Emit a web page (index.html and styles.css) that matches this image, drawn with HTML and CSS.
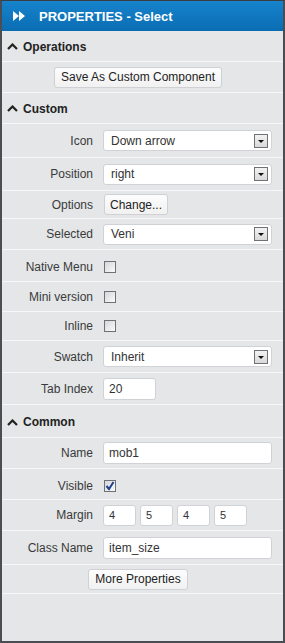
FILE: index.html
```html
<!DOCTYPE html>
<html lang="en">
<head>
    <meta charset="UTF-8">
    <meta name="viewport" content="width=device-width, initial-scale=1.0">
    <title>Properties - Select</title>
    <link rel="stylesheet" href="styles.css">
</head>
<body>
    <div class="panel">
        <div class="titlebar">
            <svg class="title-icon" width="12" height="10" viewBox="0 0 12 10">
                <path d="M0 0 L6 5 L0 10 Z M6 0 L12 5 L6 10 Z" fill="#fff"/>
            </svg>
            <span>PROPERTIES - Select</span>
        </div>

        <div class="section-head">
            <svg class="caret" width="11" height="7" viewBox="0 0 11 7">
                <path d="M1 6 L5.5 1.5 L10 6" fill="none" stroke="#222" stroke-width="2.2"/>
            </svg>
            Operations
        </div>
        <div class="row row-center">
            <button class="btn">Save As Custom Component</button>
        </div>

        <div class="section-head">
            <svg class="caret" width="11" height="7" viewBox="0 0 11 7">
                <path d="M1 6 L5.5 1.5 L10 6" fill="none" stroke="#222" stroke-width="2.2"/>
            </svg>
            Custom
        </div>
        <div class="row h34">
            <label>Icon</label>
            <div class="select"><span>Down arrow</span><span class="arrow"></span></div>
        </div>
        <div class="row h33">
            <label>Position</label>
            <div class="select"><span>right</span><span class="arrow"></span></div>
        </div>
        <div class="row h28">
            <label>Options</label>
            <button class="btn btn-small">Change...</button>
        </div>
        <div class="row">
            <label>Selected</label>
            <div class="select"><span>Veni</span><span class="arrow"></span></div>
        </div>
        <div class="row h32 low">
            <label>Native Menu</label>
            <span class="check"></span>
        </div>
        <div class="row h30">
            <label>Mini version</label>
            <span class="check"></span>
        </div>
        <div class="row h29">
            <label>Inline</label>
            <span class="check"></span>
        </div>
        <div class="row h32">
            <label>Swatch</label>
            <div class="select"><span>Inherit</span><span class="arrow"></span></div>
        </div>
        <div class="row h32">
            <label>Tab Index</label>
            <input class="field field-short" type="text" value="20">
        </div>

        <div class="section-head head-tall">
            <svg class="caret" width="11" height="7" viewBox="0 0 11 7">
                <path d="M1 6 L5.5 1.5 L10 6" fill="none" stroke="#222" stroke-width="2.2"/>
            </svg>
            Common
        </div>
        <div class="row">
            <label>Name</label>
            <input class="field" type="text" value="mob1">
        </div>
        <div class="row low">
            <label>Visible</label>
            <span class="check">
                <svg width="10" height="10" viewBox="0 0 10 10">
                    <path d="M1.5 5 L4 8 L8.5 1" fill="none" stroke="#1f3f8f" stroke-width="2"/>
                </svg>
            </span>
        </div>
        <div class="row">
            <label>Margin</label>
            <div class="margins">
                <input class="field field-tiny" type="text" value="4">
                <input class="field field-tiny" type="text" value="5">
                <input class="field field-tiny" type="text" value="4">
                <input class="field field-tiny" type="text" value="5">
            </div>
        </div>
        <div class="row h34">
            <label>Class Name</label>
            <input class="field" type="text" value="item_size">
        </div>
        <div class="row h29 row-center">
            <button class="btn">More Properties</button>
        </div>
    </div>
</body>
</html>
```

FILE: styles.css
```css
body {
    margin: 0;
    font-family: 'Liberation Sans', Arial, sans-serif;
    font-size: 12px;
    color: #3a3a3a;
}
.panel {
    width: 285px;
    height: 643px;
    box-sizing: border-box;
    border: 2px solid #4a4d52;
    border-top: 1px solid #3a3d42;
    background: #e4e6e8;
    overflow: hidden;
}
.titlebar {
    height: 30px;
    display: flex;
    align-items: center;
    padding-left: 11px;
    background: linear-gradient(#1683cc, #0a6db3);
    color: #fff;
    font-size: 13px;
    font-weight: bold;
}
.title-icon {
    margin-right: 14px;
}
.section-head {
    height: 31px;
    box-sizing: border-box;
    padding-top: 1px;
    display: flex;
    align-items: center;
    padding-left: 5px;
    font-weight: bold;
    color: #222;
    border-bottom: 1px solid #f6f7f8;
}
.head-tall {
    height: 33px;
    padding-top: 2px;
}
.caret {
    margin-right: 5px;
}
.row {
    height: 30px;
    display: flex;
    align-items: center;
    border-bottom: 1px solid #f6f7f8;
}
.h28 { height: 27px; }
.h29 { height: 28px; }
.h30 { height: 29px; }
.h32 { height: 31px; }
.h33 { height: 32px; }
.h34 { height: 33px; }
.low {
    box-sizing: content-box;
    padding-top: 3px;
    height: 27px;
}
.h32.low {
    height: 28px;
}
.row-center {
    justify-content: center;
}
.row label {
    width: 91px;
    text-align: right;
    padding-right: 10px;
    flex-shrink: 0;
}
.btn {
    font-family: inherit;
    font-size: 12px;
    color: #222;
    background: linear-gradient(#fdfdfd, #f1f1f1);
    border: 1px solid #cfd1d4;
    border-radius: 3px;
    height: 21px;
    padding: 0 6px;
}
.row-center .btn {
    margin-right: 9px;
}
.btn-small {
    margin-left: 1px;
    padding: 0 5px;
}
.select {
    width: 169px;
    height: 21px;
    box-sizing: border-box;
    background: #fff;
    border: 1px solid #d0d2d5;
    border-radius: 3px;
    display: flex;
    align-items: center;
    justify-content: space-between;
    padding: 0 3px 0 7px;
    color: #333;
}
.arrow {
    width: 12px;
    height: 12px;
    border: 1px solid #6f7174;
    background: linear-gradient(#f2f2f2, #d9d9d9);
    position: relative;
}
.arrow::after {
    content: "";
    position: absolute;
    left: 3px;
    top: 5px;
    border-left: 3px solid transparent;
    border-right: 3px solid transparent;
    border-top: 3px solid #111;
}
.field {
    width: 169px;
    height: 22px;
    box-sizing: border-box;
    border: 1px solid #d0d2d5;
    border-radius: 3px;
    background: #fff;
    font-family: inherit;
    font-size: 12px;
    color: #333;
    padding: 0 0 0 5px;
    outline: none;
}
.field-short {
    width: 53px;
}
.margins {
    display: flex;
    gap: 4px;
}
.field-tiny {
    width: 33px;
    height: 21px;
    font-size: 11px;
}
.check {
    width: 10px;
    height: 10px;
    margin-left: 1px;
    border: 1px solid #6f7174;
    background: linear-gradient(135deg, #d4d6d9, #fbfbfb);
    display: flex;
    align-items: center;
    justify-content: center;
}
```
